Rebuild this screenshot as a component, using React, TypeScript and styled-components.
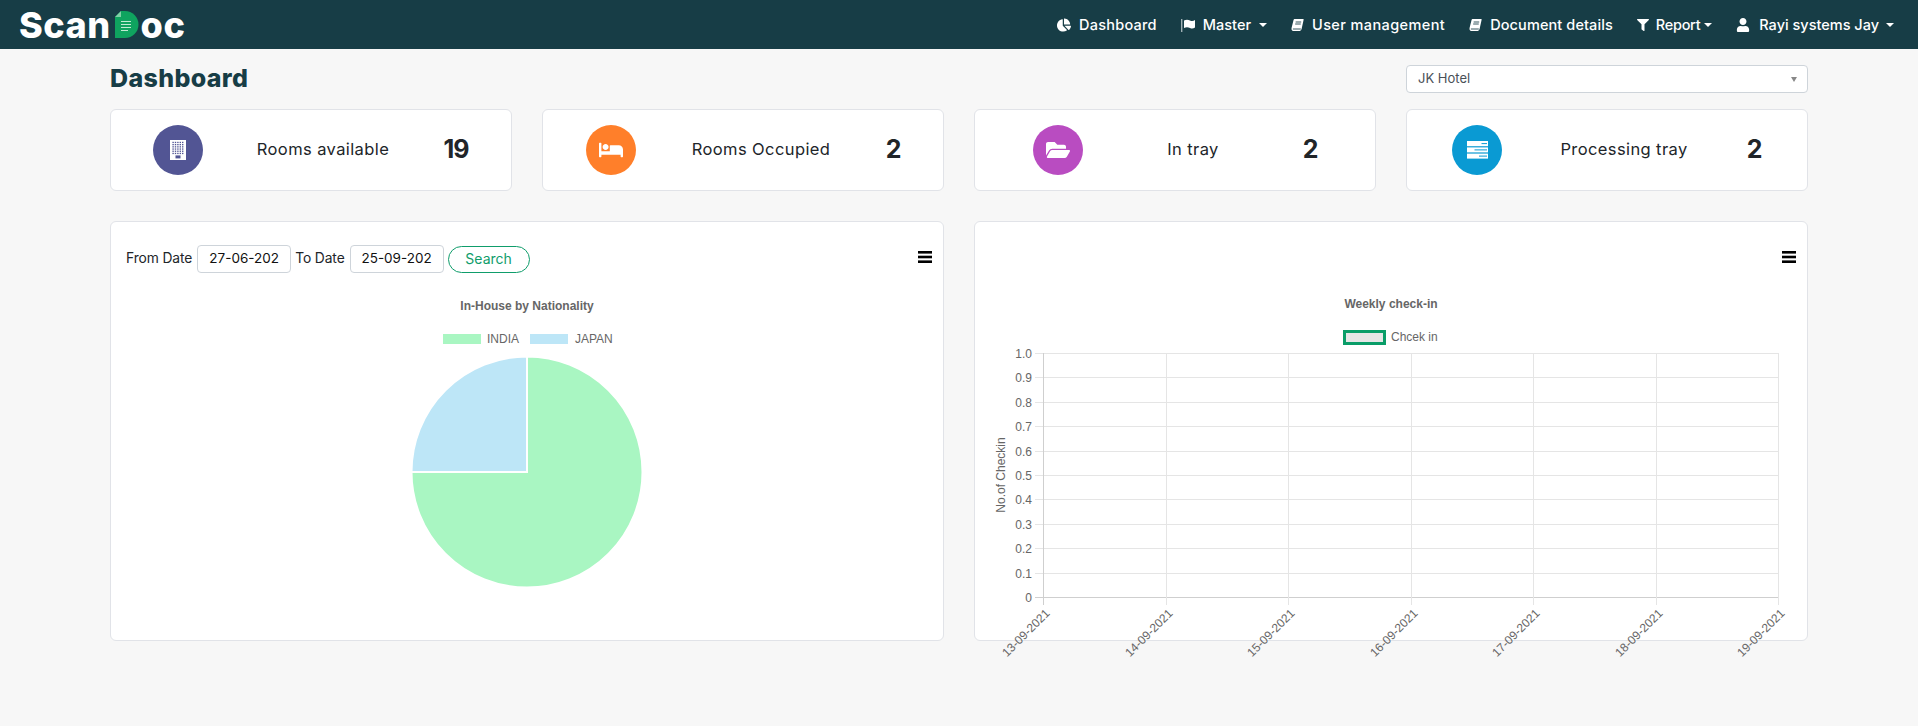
import React from 'react';
import styled, { createGlobalStyle } from 'styled-components';
import { FaBed, FaChartPie, FaFilter, FaFolderOpen, FaUser } from 'react-icons/fa';

const GlobalStyle = createGlobalStyle`
  html, body { margin: 0; padding: 0; background: #f7f7f7; }
  body { font-family: Inter, "Open Sans", sans-serif; color: #212529; }
  * { box-sizing: border-box; }
`;

const Page = styled.div`
  width: 1918px;
  height: 726px;
  overflow: hidden;
  background: #f7f7f7;
`;

// Top bar
const Navbar = styled.nav`
  height: 49px;
  background: #173d46;
  display: flex;
  align-items: center;
  justify-content: space-between;
  padding: 0 24px 0 19px;
`;

const Logo = styled.div`
  display: flex;
  align-items: center;
  color: #fff;
  font-size: 36px;
  font-weight: 800;
  letter-spacing: 0.5px;
  line-height: 1;
`;

const LogoMark = styled.svg`
  width: 24px;
  height: 27px;
  margin: 0 2px 0 4px;
`;

const NavList = styled.div`
  display: flex;
  align-items: center;
  gap: 24px;
`;

const NavItem = styled.a`
  display: flex;
  align-items: center;
  color: #fff;
  font-size: 14.5px;
  font-weight: 500;
  white-space: nowrap;
  svg { flex: none; }
`;

const NavLabel = styled.span<{ $gap: number; $track: number }>`
  margin-left: ${p => p.$gap}px;
  letter-spacing: ${p => p.$track}px;
`;

const Caret = styled.span<{ $gap: number }>`
  margin-left: ${p => p.$gap}px;
  border-top: 4px solid #fff;
  border-left: 4px solid transparent;
  border-right: 4px solid transparent;
`;

// Main content
const Content = styled.main`
  padding: 16px 110px 0;
`;

const TitleRow = styled.div`
  display: flex;
  align-items: center;
  justify-content: space-between;
  height: 28px;
`;

const Title = styled.h1`
  margin: -3px 0 0;
  color: #173d46;
  font-size: 25px;
  font-weight: 800;
  letter-spacing: 0.35px;
`;

const SelectBox = styled.div`
  width: 402px;
  height: 28px;
  background: #fff;
  border: 1px solid #ced4da;
  border-radius: 4px;
  display: flex;
  align-items: center;
  justify-content: space-between;
  padding: 0 10px 2px 11px;
  font-size: 13px;
  color: #495057;
`;

const SelectArrow = styled.span`
  margin-top: 2px;
  border-top: 5px solid #888;
  border-left: 3.5px solid transparent;
  border-right: 3.5px solid transparent;
`;

const StatGrid = styled.section`
  display: grid;
  grid-template-columns: repeat(4, 402px);
  justify-content: space-between;
  margin-top: 16px;
`;

const Card = styled.div`
  background: #fff;
  border: 1px solid #e1e3e8;
  border-radius: 6px;
`;

const StatCard = styled(Card)<{ $cols: string }>`
  height: 82px;
  display: grid;
  grid-template-columns: ${p => p.$cols};
  align-items: center;
  justify-items: center;
`;

const StatIcon = styled.div<{ $bg: string; $size: number }>`
  width: 50px;
  height: 50px;
  border-radius: 50%;
  background: ${p => p.$bg};
  color: #fff;
  display: flex;
  align-items: center;
  justify-content: center;
  font-size: ${p => p.$size}px;
`;

const StatLabel = styled.div`
  margin-top: -2px;
  font-size: 16.5px;
  letter-spacing: 0.4px;
  color: #212529;
  white-space: nowrap;
`;

const StatValue = styled.div`
  margin-top: -2px;
  font-size: 25px;
  font-weight: 700;
  letter-spacing: -1px;
  color: #212529;
`;

const PanelGrid = styled.section`
  display: grid;
  grid-template-columns: repeat(2, 834px);
  justify-content: space-between;
  margin-top: 30px;
`;

const Panel = styled(Card)`
  height: 420px;
  padding-top: 23px;
`;

const PanelHead = styled.div`
  height: 28px;
  display: flex;
  align-items: center;
  justify-content: flex-end;
  padding: 0 11px 0 15px;
`;

const DateForm = styled.form`
  display: flex;
  align-items: center;
  margin: 0 auto 0 0;
`;

const DateLabel = styled.label`
  margin: -2px 5px 0 0;
  font-size: 13.8px;
  letter-spacing: -0.1px;
  color: #212529;
`;

const DateInput = styled.div`
  width: 94px;
  height: 28px;
  margin-right: 4px;
  padding-bottom: 2px;
  border: 1px solid #ced4da;
  border-radius: 4px;
  background: #fff;
  display: flex;
  align-items: center;
  justify-content: center;
  font-size: 13.5px;
  color: #111;
`;

const SearchButton = styled.button`
  width: 82px;
  height: 27px;
  padding: 0 0 2px;
  background: #fff;
  border: 1px solid #0f9d6b;
  border-radius: 14px;
  color: #0f9d6b;
  font-family: inherit;
  font-size: 14px;
`;

const MenuIcon = styled.svg`
  width: 14px;
  height: 12px;
  margin-top: -4px;
  flex: none;
`;

const ChartSvg = styled.svg`
  display: block;
  width: 832px;
  height: 367px;
  overflow: visible;
  font-family: "Liberation Sans", Arial, sans-serif;
`;

const Menu = () => (
  <MenuIcon viewBox="0 0 14 12">
    <rect y="0" width="14" height="2.6" fill="#000" />
    <rect y="4.7" width="14" height="2.6" fill="#000" />
    <rect y="9.4" width="14" height="2.6" fill="#000" />
  </MenuIcon>
);

const BookIcon = () => (
  <svg width="13" height="14" viewBox="0 0 14 14" preserveAspectRatio="none">
    <path d="M4.2 1 H13 a.6 .6 0 0 1 .6 .8 L11.4 11 a2.5 2.5 0 0 1 -2 2 H2.5 C1 13 .3 11.6 .6 10 L2.6 2.4 C2.9 1.5 3.4 1 4.2 1 Z" fill="#fff" />
    <path d="M2 11 H10.6 M5 4 H11 M4.5 6 H10.5" stroke="#173d46" strokeWidth="0.9" fill="none" />
  </svg>
);

const FlagIcon = () => (
  <svg width="14" height="14" viewBox="0 0 14 14">
    <rect x="0" y="1" width="1.4" height="13" fill="#9fb0b4" />
    <path d="M3 2.5 C5 1.5 7 1.5 9 2.5 C11 3.5 12.5 3 14 2 V9.5 C12.5 10.5 11 11 9 10 C7 9 5 9 3 10 Z" fill="#fff" />
  </svg>
);

const BuildingIcon = () => (
  <svg width="16" height="20" viewBox="0 0 16 20">
    <rect width="16" height="20" fill="#fff" />
    {[0, 1, 2, 3, 4, 5].map(r =>
      [0, 1, 2, 3, 4].map(c => (
        <rect key={`${r}-${c}`} x={2.4 + c * 2.4} y={1.8 + r * 2.2} width="1.4" height="1.3" fill="#525594" />
      ))
    )}
    <rect x="5.5" y="15.4" width="5" height="3" fill="#525594" />
  </svg>
);

const TrayIcon = () => (
  <svg width="21" height="18" viewBox="0 0 21 18">
    <rect width="21" height="5.2" fill="#fff" />
    <rect y="6.4" width="21" height="5" fill="#fff" />
    <rect y="12.6" width="21" height="5" fill="#fff" />
    <path d="M14.5 2.6 H20 M7.5 8.9 H20 M12 15.1 H20" stroke="#0a9ad3" strokeWidth="1" />
  </svg>
);

const stats = [
  { label: 'Rooms available', value: '19', bg: '#525594', cols: '134px 156px 1fr', size: 20, icon: <BuildingIcon /> },
  { label: 'Rooms Occupied', value: '2', bg: '#ff7f2a', cols: '136px 164px 1fr', size: 24, icon: <FaBed /> },
  { label: 'In tray', value: '2', bg: '#b94cc1', cols: '166px 104px 1fr', size: 24, icon: <FaFolderOpen /> },
  { label: 'Processing tray', value: '2', bg: '#0a9ad3', cols: '140px 154px 1fr', size: 20, icon: <TrayIcon /> },
];

const NationalityChart = () => (
  <ChartSvg viewBox="111 273 832 367">
    <text x="527" y="310" textAnchor="middle" fontSize="12" fontWeight="700" fill="#666">In-House by Nationality</text>
    <rect x="443" y="334" width="38" height="10" fill="#a9f6c2" />
    <text x="487" y="343" fontSize="12" fill="#666">INDIA</text>
    <rect x="530" y="334" width="38" height="10" fill="#bde6f7" />
    <text x="575" y="343" fontSize="12" fill="#666">JAPAN</text>
    <path d="M527 472 V356.5 A115.5 115.5 0 1 1 411.5 472 Z" fill="#a9f6c2" stroke="#fff" strokeWidth="2" />
    <path d="M527 472 H411.5 A115.5 115.5 0 0 1 527 356.5 Z" fill="#bde6f7" stroke="#fff" strokeWidth="2" />
  </ChartSvg>
);

const yTicks = ['1.0', '0.9', '0.8', '0.7', '0.6', '0.5', '0.4', '0.3', '0.2', '0.1', '0'];
const xTicks = ['13-09-2021', '14-09-2021', '15-09-2021', '16-09-2021', '17-09-2021', '18-09-2021', '19-09-2021'];
const left = 1043;
const right = 1778;
const top = 353;
const bottom = 597;

const CheckinChart = () => (
  <ChartSvg viewBox="975 273 832 367">
    <text x="1391" y="308" textAnchor="middle" fontSize="12" fontWeight="700" fill="#666">Weekly check-in</text>
    <rect x="1344.5" y="331.5" width="40" height="12" fill="#e6e6e6" stroke="#0a9d68" strokeWidth="3" />
    <text x="1391" y="341" fontSize="12" fill="#666">Chcek in</text>
    <text transform="translate(1005 475) rotate(-90)" textAnchor="middle" fontSize="12" fill="#666">No.of Checkin</text>
    {yTicks.map((t, i) => {
      const y = Math.round(top + ((bottom - top) * i) / 10) + 0.5;
      return (
        <g key={t}>
          <line x1="1035" x2={right + 0.5} y1={y} y2={y} stroke={i === 10 ? '#cfcfcf' : '#e5e5e5'} />
          <text x="1032" y={y + 4} textAnchor="end" fontSize="12" fill="#666">{t}</text>
        </g>
      );
    })}
    {xTicks.map((t, i) => {
      const x = Math.round(left + ((right - left) * i) / 6) + 0.5;
      return (
        <g key={t}>
          <line x1={x} x2={x} y1={top} y2={bottom + 8} stroke={i === 0 ? '#cfcfcf' : '#e5e5e5'} />
          <text transform={`translate(${x + 7} ${bottom + 17}) rotate(-45)`} textAnchor="end" fontSize="12" fill="#666">{t}</text>
        </g>
      );
    })}
  </ChartSvg>
);

export default function App() {
  return (
    <Page>
      <GlobalStyle />
      <Navbar>
        <Logo>
          Scan
          <LogoMark viewBox="0 0 24 27">
            <path d="M0 6 L6 0 H10 A13.5 13.5 0 0 1 10 27 H0 Z" fill="#0fa35f" />
            <path d="M0 6 L6 0 V6 Z" fill="#7fd0a6" />
            <path d="M6 10.5 H16 M6 13.5 H16 M6 16.5 H16 M6 19.5 H13" stroke="#bfead3" strokeWidth="1" />
          </LogoMark>
          oc
        </Logo>
        <NavList>
          <NavItem><FaChartPie size={14} /><NavLabel $gap={8} $track={0.25}>Dashboard</NavLabel></NavItem>
          <NavItem><FlagIcon /><NavLabel $gap={8} $track={0}>Master</NavLabel><Caret $gap={8} /></NavItem>
          <NavItem><BookIcon /><NavLabel $gap={8} $track={0.4}>User management</NavLabel></NavItem>
          <NavItem><BookIcon /><NavLabel $gap={8} $track={0.1}>Document details</NavLabel></NavItem>
          <NavItem><FaFilter size={12} /><NavLabel $gap={7} $track={-0.3}>Report</NavLabel><Caret $gap={4} /></NavItem>
          <NavItem><FaUser size={14} /><NavLabel $gap={9} $track={0}>Rayi systems Jay</NavLabel><Caret $gap={7} /></NavItem>
        </NavList>
      </Navbar>
      <Content>
        <TitleRow>
          <Title>Dashboard</Title>
          <SelectBox>JK Hotel<SelectArrow /></SelectBox>
        </TitleRow>
        <StatGrid>
          {stats.map(s => (
            <StatCard key={s.label} $cols={s.cols}>
              <StatIcon $bg={s.bg} $size={s.size}>{s.icon}</StatIcon>
              <StatLabel>{s.label}</StatLabel>
              <StatValue>{s.value}</StatValue>
            </StatCard>
          ))}
        </StatGrid>
        <PanelGrid>
          <Panel>
            <PanelHead>
              <DateForm>
                <DateLabel>From Date</DateLabel>
                <DateInput>27-06-202</DateInput>
                <DateLabel>To Date</DateLabel>
                <DateInput>25-09-202</DateInput>
                <SearchButton type="button">Search</SearchButton>
              </DateForm>
              <Menu />
            </PanelHead>
            <NationalityChart />
          </Panel>
          <Panel>
            <PanelHead><Menu /></PanelHead>
            <CheckinChart />
          </Panel>
        </PanelGrid>
      </Content>
    </Page>
  );
}
